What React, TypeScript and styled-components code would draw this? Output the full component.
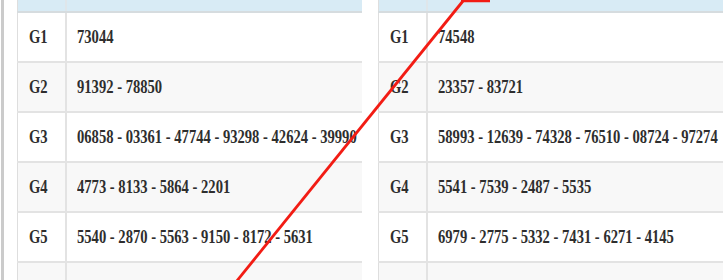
import React from 'react'
import styled, { createGlobalStyle } from 'styled-components'

const GlobalStyle = createGlobalStyle`
  html, body {
    margin: 0;
    padding: 0;
    background: #fff;
    overflow: hidden;
  }
`

const Page = styled.div`
  position: relative;
  display: flex;
  gap: 16px;
  width: 725px;
  height: 280px;
  box-sizing: border-box;
  margin-left: 1px;
  padding-left: 13px;
  border-left: 3px solid #cbcbcb;
  overflow: hidden;
  font-family: 'Liberation Serif', 'Times New Roman', serif;
`

const Panel = styled.div`
  width: 345px;
  flex: none;
  overflow: hidden;
`

const Table = styled.table`
  width: 100%;
  table-layout: fixed;
  border-collapse: collapse;
  border-left: 1px solid #dedede;
`

const HeadCell = styled.th<{ $first?: boolean }>`
  height: 11px;
  padding: 0;
  background: #d8ebf5;
  border-bottom: 2px solid #d6dcdf;
  border-right: ${(p) => (p.$first ? '2px solid #dfe6ea' : 'none')};
  width: ${(p) => (p.$first ? '47px' : 'auto')};
`

const Row = styled.tr<{ $striped: boolean }>`
  background: ${(p) => (p.$striped ? '#f8f8f8' : '#fff')};
`

const Cell = styled.td<{ $first?: boolean }>`
  height: 48px;
  padding: 0 0 0 ${(p) => (p.$first ? '11px' : '10px')};
  border-bottom: 2px solid #e3e3e3;
  border-right: ${(p) => (p.$first ? '2px solid #e3e3e3' : 'none')};
  vertical-align: middle;
  white-space: nowrap;
  overflow: hidden;
  color: #2e2e2e;
  font-size: 14.6px;
  font-weight: bold;
`

const Tall = styled.span`
  display: inline-block;
  transform: scaleY(1.32);
  transform-origin: center;
`

const Overlay = styled.svg`
  position: absolute;
  top: 0;
  left: 0;
  pointer-events: none;
`

type Prize = { label: string; value: string }

const left: Prize[] = [
  { label: 'G1', value: '73044' },
  { label: 'G2', value: '91392 - 78850' },
  { label: 'G3', value: '06858 - 03361 - 47744 - 93298 - 42624 - 39990' },
  { label: 'G4', value: '4773 - 8133 - 5864 - 2201' },
  { label: 'G5', value: '5540 - 2870 - 5563 - 9150 - 8172 - 5631' },
  { label: 'G6', value: '849 - 336 - 892' },
]

const right: Prize[] = [
  { label: 'G1', value: '74548' },
  { label: 'G2', value: '23357 - 83721' },
  { label: 'G3', value: '58993 - 12639 - 74328 - 76510 - 08724 - 97274' },
  { label: 'G4', value: '5541 - 7539 - 2487 - 5535' },
  { label: 'G5', value: '6979 - 2775 - 5332 - 7431 - 6271 - 4145' },
  { label: 'G6', value: '437 - 648 - 421' },
]

const ResultTable = ({ rows }: { rows: Prize[] }) => (
  <Panel>
    <Table>
      <thead>
        <tr>
          <HeadCell $first />
          <HeadCell />
        </tr>
      </thead>
      <tbody>
        {rows.map((row, i) => (
          <Row key={row.label} $striped={i % 2 === 1}>
            <Cell $first>
              <Tall>{row.label}</Tall>
            </Cell>
            <Cell>
              <Tall>{row.value}</Tall>
            </Cell>
          </Row>
        ))}
      </tbody>
    </Table>
  </Panel>
)

export default function App() {
  return (
    <>
      <GlobalStyle />
      <Page>
        <ResultTable rows={left} />
        <ResultTable rows={right} />
        <Overlay width="725" height="280" viewBox="0 0 725 280">
          <line x1="457" y1="0.5" x2="486" y2="0.5" stroke="#f21c14" strokeWidth="3.5" />
          <line x1="459" y1="1" x2="232" y2="282" stroke="#f21c14" strokeWidth="2.8" />
        </Overlay>
      </Page>
    </>
  )
}
